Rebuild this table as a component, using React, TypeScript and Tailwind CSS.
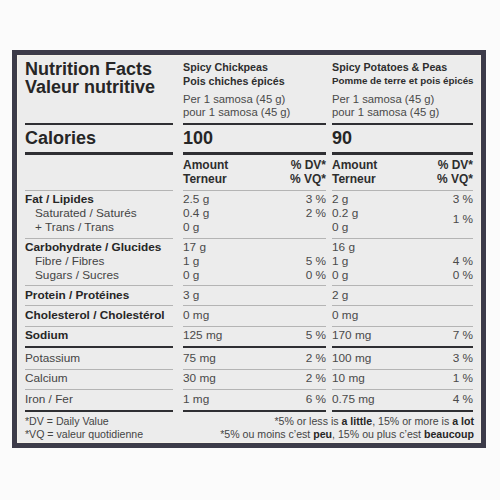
import React from "react";

type Cell = { v: React.ReactNode[]; p?: React.ReactNode[] };

const LINE = "border-[#b4b4b4]";
const THICK = "border-[#2f2f33]";

function Lines({ items, cls = "" }: { items: React.ReactNode[]; cls?: string }) {
  return (
    <div className={cls}>
      {items.map((t, i) => (
        <div key={i} className="h-[14px] leading-[14px] whitespace-nowrap">
          {t}
        </div>
      ))}
    </div>
  );
}

function ValCell({
  v,
  p,
  border,
  pad,
}: {
  v: React.ReactNode[];
  p: React.ReactNode[];
  border: string;
  pad: string;
}) {
  return (
    <div className={`flex justify-between text-[#4a4a4a] ${border} ${pad}`}>
      <Lines items={v} />
      <Lines items={p} cls="text-right" />
    </div>
  );
}

function Row({
  label,
  c1,
  c2,
  border,
  pad,
}: {
  label: React.ReactNode[];
  c1: Cell;
  c2: Cell;
  border: string;
  pad: string;
}) {
  return (
    <div className="flex text-[11.8px]">
      <div className={`w-[148px] ${border} ${pad}`}>
        <Lines items={label} />
      </div>
      <div className="w-[143px] ml-[10px]">
        <ValCell v={c1.v} p={c1.p ?? []} border={border} pad={pad} />
      </div>
      <div className="w-[141px] ml-[6px]">
        <ValCell v={c2.v} p={c2.p ?? []} border={border} pad={pad} />
      </div>
    </div>
  );
}

const B = ({ children }: { children: React.ReactNode }) => (
  <span className="font-bold text-[#262626]">{children}</span>
);
const R = ({ children }: { children: React.ReactNode }) => (
  <span className="text-[#444]">{children}</span>
);
const I = ({ children }: { children: React.ReactNode }) => (
  <span className="pl-[10px] text-[#444]">{children}</span>
);

export default function App() {
  const thin = `border-b ${LINE}`;
  return (
    <div className="w-[500px] h-[500px] bg-[#fbfbfb] pt-[50px] pl-[12px] font-['Liberation_Sans',Arial,sans-serif]">
      <div className="w-[474px] h-[398px] border-[5px] border-[#3c3b49] bg-[#ececec] pl-[8px] pr-[7px] shadow-[inset_0_0_0_1px_#f4f1e8]">
        {/* Header */}
        <div className="flex">
          <div className={`w-[148px] h-[70px] border-b-2 ${THICK} pt-[5px]`}>
            <div className="text-[18px] leading-[18px] font-bold text-[#262626] whitespace-nowrap">
              Nutrition Facts
            </div>
            <div className="text-[18px] leading-[18px] font-bold text-[#262626] whitespace-nowrap">
              Valeur nutritive
            </div>
          </div>
          <div className={`w-[143px] ml-[10px] h-[70px] border-b-2 ${THICK} pt-[5px] whitespace-nowrap`}>
            <div className="text-[10.7px] leading-[14px] font-bold text-[#2e2e2e]">Spicy Chickpeas</div>
            <div className="text-[10.7px] leading-[14px] font-bold text-[#2e2e2e]">Pois chiches épicés</div>
            <div className="mt-[5px] text-[11.3px] leading-[13px] text-[#4a4a4a]">Per 1 samosa (45 g)</div>
            <div className="text-[11.3px] leading-[13px] text-[#4a4a4a]">pour 1 samosa (45 g)</div>
          </div>
          <div className={`w-[141px] ml-[6px] h-[70px] border-b-2 ${THICK} pt-[5px] whitespace-nowrap`}>
            <div className="text-[10.7px] leading-[14px] font-bold text-[#2e2e2e]">Spicy Potatoes &amp; Peas</div>
            <div className="text-[9.8px] leading-[14px] font-bold text-[#2e2e2e]">Pomme de terre et pois épicés</div>
            <div className="mt-[5px] text-[11.3px] leading-[13px] text-[#4a4a4a]">Per 1 samosa (45 g)</div>
            <div className="text-[11.3px] leading-[13px] text-[#4a4a4a]">pour 1 samosa (45 g)</div>
          </div>
        </div>

        {/* Calories */}
        <div className="flex text-[18px] leading-[18px] font-bold text-[#262626]">
          <div className={`w-[148px] h-[30px] border-b-[3px] ${THICK} pt-[4px]`}>Calories</div>
          <div className={`w-[143px] ml-[10px] h-[30px] border-b-[3px] ${THICK} pt-[4px]`}>100</div>
          <div className={`w-[141px] ml-[6px] h-[30px] border-b-[3px] ${THICK} pt-[4px]`}>90</div>
        </div>

        {/* Amount header */}
        <div className="flex text-[12px] font-bold text-[#2e2e2e]">
          <div className={`w-[148px] h-[36px] ${thin}`} />
          <div className={`w-[143px] ml-[10px] h-[36px] ${thin} pt-[3px] flex justify-between`}>
            <Lines items={["Amount", "Terneur"]} />
            <Lines items={["% DV*", "% VQ*"]} cls="text-right" />
          </div>
          <div className={`w-[141px] ml-[6px] h-[36px] ${thin} pt-[3px] flex justify-between`}>
            <Lines items={["Amount", "Terneur"]} />
            <Lines items={["% DV*", "% VQ*"]} cls="text-right" />
          </div>
        </div>

        <Row
          label={[<B>Fat / Lipides</B>, <I>Saturated / Saturés</I>, <I>+ Trans / Trans</I>]}
          c1={{ v: ["2.5 g", "0.4 g", "0 g"], p: ["3 %", "2 %"] }}
          c2={{ v: ["2 g", "0.2 g", "0 g"], p: ["3 %", <div className="pt-[6px]">1 %</div>] }}
          border={thin}
          pad="pt-[1px] pb-[4px]"
        />
        <Row
          label={[<B>Carbohydrate / Glucides</B>, <I>Fibre / Fibres</I>, <I>Sugars / Sucres</I>]}
          c1={{ v: ["17 g", "1 g", "0 g"], p: ["", "5 %", "0 %"] }}
          c2={{ v: ["16 g", "1 g", "0 g"], p: ["", "4 %", "0 %"] }}
          border={thin}
          pad="pt-[1px] pb-[3px]"
        />
        <Row
          label={[<B>Protein / Protéines</B>]}
          c1={{ v: ["3 g"] }}
          c2={{ v: ["2 g"] }}
          border={thin}
          pad="pt-[2px] pb-[3px]"
        />
        <Row
          label={[<B>Cholesterol / Cholestérol</B>]}
          c1={{ v: ["0 mg"] }}
          c2={{ v: ["0 mg"] }}
          border={thin}
          pad="pt-[2px] pb-[4px]"
        />
        <Row
          label={[<B>Sodium</B>]}
          c1={{ v: ["125 mg"], p: ["5 %"] }}
          c2={{ v: ["170 mg"], p: ["7 %"] }}
          border={`border-b-2 ${THICK}`}
          pad="pt-[1px] pb-[4px]"
        />
        <Row
          label={[<R>Potassium</R>]}
          c1={{ v: ["75 mg"], p: ["2 %"] }}
          c2={{ v: ["100 mg"], p: ["3 %"] }}
          border={thin}
          pad="pt-[3px] pb-[4px]"
        />
        <Row
          label={[<R>Calcium</R>]}
          c1={{ v: ["30 mg"], p: ["2 %"] }}
          c2={{ v: ["10 mg"], p: ["1 %"] }}
          border={thin}
          pad="pt-[1px] pb-[4px]"
        />
        <Row
          label={[<R>Iron / Fer</R>]}
          c1={{ v: ["1 mg"], p: ["6 %"] }}
          c2={{ v: ["0.75 mg"], p: ["4 %"] }}
          border={`border-b-2 ${THICK}`}
          pad="pt-[2px] pb-[4px]"
        />

        {/* Footnote */}
        <div className="flex justify-between text-[10.6px] leading-[13px] text-[#444] pt-[3px] whitespace-nowrap">
          <div>
            <div>*DV = Daily Value</div>
            <div>*VQ = valeur quotidienne</div>
          </div>
          <div className="text-right">
            <div>
              *5% or less is <b className="text-[#262626]">a little</b>, 15% or more is{" "}
              <b className="text-[#262626]">a lot</b>
            </div>
            <div>
              *5% ou moins c’est <b className="text-[#262626]">peu</b>, 15% ou plus c’est{" "}
              <b className="text-[#262626]">beaucoup</b>
            </div>
          </div>
        </div>
      </div>
    </div>
  );
}
